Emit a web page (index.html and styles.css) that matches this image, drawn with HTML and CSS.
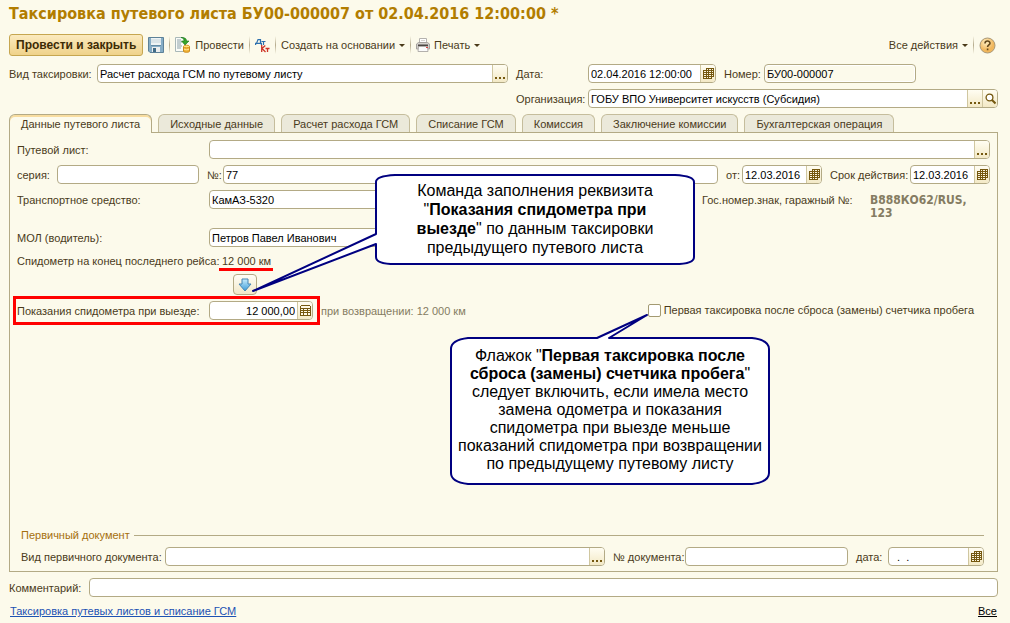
FILE: index.html
```html
<!DOCTYPE html>
<html lang="ru">
<head>
<meta charset="utf-8">
<title>Таксировка путевого листа</title>
<link rel="stylesheet" href="styles.css">
</head>
<body>
<svg class="defs" aria-hidden="true">
  <symbol id="calendar" viewBox="0 0 11 12">
    <path d="M3 0h8v9H9v2H0V2h3z" fill="#75580f"/>
    <path d="M4 1h1v1H4zM6 1h2v1H6zM9 1h1v1H9zM1 3h2v1H1zM4 3h1v1H4zM6 3h2v1H6zM9 3h1v1H9zM1 5h2v1H1zM4 5h1v1H4zM6 5h2v1H6zM9 5h1v1H9zM1 7h2v1H1zM4 7h1v1H4zM6 7h2v1H6zM9 7h1v1H9zM1 9h2v1H1zM4 9h1v1H4zM6 9h2v1H6z" fill="#fcf6e0"/>
  </symbol>
  <symbol id="dots" viewBox="0 0 11 12">
    <path d="M0 9h2v2H0zM4 9h2v2H4zM8 9h2v2H8z" fill="#75580f"/>
  </symbol>
</svg>
<main class="form">
  <h1 class="title">Таксировка путевого листа БУ00-000007 от 02.04.2016 12:00:00 *</h1>

  <div class="toolbar">
    <button class="primary">Провести и закрыть</button>
    <button class="tool save" aria-label="Записать">
      <svg width="16" height="16" viewBox="0 0 16 16"><path d="M.5.500h15v15H2l-1.500-1.500z" fill="#86adc6" stroke="#5d8198"/><path d="M3 1h10v7H3z" fill="#eef4f5"/><path d="M3 3h10M3 5h10" stroke="#c6d4da"/><path d="M3 8h10v1H3z" fill="#648ca5"/><path d="M4 10h8v5H4z" fill="#eceeee"/><path d="M5 11h3v4H5z" fill="#416b86"/></svg>
    </button>
    <span class="separator"></span>
    <button class="tool">
      <svg width="16" height="16" viewBox="0 0 16 16"><path d="M.5.500h8l2 2v12H.5z" fill="#fafcf8" stroke="#a9b8b8"/><path d="M2 3h4M2 5h5M2 7h4M2 9h5M2 11h4" stroke="#8ba0a8"/><path d="M6 .500c4 0 5.500 1 5.500 3.500H14L10 8 6.500 4H9c0-2-1-3-3-3.500z" fill="#35a52b" stroke="#167216" stroke-width=".6"/><path d="M8.500 9.500v4.700c0 1.500 6 1.500 6 0V9.500" fill="#f1b235" stroke="#c98a1c"/><ellipse cx="11.500" cy="9.500" rx="3" ry="1.300" fill="#ffe47c" stroke="#d79a25"/><path d="M9 12c1 1 4 1 5 0" stroke="#ffe99a" fill="none"/></svg>
      <span>Провести</span>
    </button>
    <span class="separator"></span>
    <button class="tool" aria-label="Дебет и кредит">
      <svg width="15" height="15" viewBox="0 0 15 15" fill="none"><path d="M.600 7V5.400h5.800V7M1.500 5.400L3 1.600h2.500v3.800M6.500 3.500h4M8.500 3.500V7" stroke="#2d70ae" stroke-width="1.200"/><path d="M6.700 7v7M10.300 7.500L7 10.500l3.500 3.500M10.500 10.500h4M12.500 10.500V14" stroke="#cf3527" stroke-width="1.300"/></svg>
    </button>
    <span class="separator"></span>
    <button class="tool">Создать на основании <i class="caret"></i></button>
    <span class="separator"></span>
    <button class="tool">
      <svg width="14" height="14" viewBox="0 0 14 14"><path d="M3.500 5V.5h7V5" fill="#fff" stroke="#b5b2ae"/><path d="M5 2.500h4" stroke="#d5d2ce"/><path d="M.5 6l2-1.500h9l2 1.500v5H.5z" fill="#d4d1cd" stroke="#a5a19c"/><path d="M2 6.500h10v3H2z" fill="#4c4642"/><path d="M2.500 8.500h9l.5 5H2z" fill="#fbfbfb" stroke="#b3b0ac"/><path d="M10 9h2v1h-2z" fill="#d44"/></svg>
      <span>Печать</span> <i class="caret"></i>
    </button>
    <span class="spacer"></span>
    <button class="tool">Все действия <i class="caret"></i></button>
    <span class="separator"></span>
    <button class="tool help" aria-label="Справка">
      <svg width="17" height="17" viewBox="0 0 17 17"><defs><radialGradient id="gold" cx=".4" cy=".3"><stop offset="0" stop-color="#fff0c4"/><stop offset="1" stop-color="#f1b75d"/></radialGradient></defs><circle cx="8.500" cy="8.500" r="7.500" fill="url(#gold)" stroke="#a89878"/><path d="M6 6.500c0-3.200 5-3.200 5-.3 0 1.700-2.400 1.700-2.400 3.800M8.600 11.500v1.700" fill="none" stroke="#64491c" stroke-width="1.600"/></svg>
    </button>
  </div>

  <div class="header">
    <div class="row kind">
      <label class="label-kind" for="kind">Вид таксировки:</label>
      <div class="field grow"><input id="kind" value="Расчет расхода ГСМ по путевому листу"><button aria-label="Выбрать"><svg><use href="#dots"/></svg></button></div>
    </div>
    <div class="header-right">
      <div class="row">
        <label class="label-right" for="date">Дата:</label>
        <div class="field datetime"><input id="date" value="02.04.2016 12:00:00"><button aria-label="Календарь"><svg><use href="#calendar"/></svg></button></div>
        <label class="label-number" for="number">Номер:</label>
        <div class="field number readonly"><input id="number" value="БУ00-000007" readonly></div>
      </div>
      <div class="row">
        <label class="label-right" for="org">Организация:</label>
        <div class="field grow"><input id="org" value="ГОБУ ВПО Университет искусств (Субсидия)"><button aria-label="Выбрать"><svg><use href="#dots"/></svg></button><button aria-label="Открыть"><svg viewBox="0 0 11 12"><circle cx="4.500" cy="4.500" r="3.400" fill="#fff" stroke="#75580f" stroke-width="1.300"/><path d="M7 7l3.500 3.500" stroke="#75580f" stroke-width="2"/></svg></button></div>
      </div>
    </div>
  </div>

  <div class="tabs" role="tablist">
    <button class="tab active" role="tab" aria-selected="true">Данные путевого листа</button>
    <button class="tab" role="tab">Исходные данные</button>
    <button class="tab" role="tab">Расчет расхода ГСМ</button>
    <button class="tab" role="tab">Списание ГСМ</button>
    <button class="tab" role="tab">Комиссия</button>
    <button class="tab" role="tab">Заключение комиссии</button>
    <button class="tab" role="tab">Бухгалтерская операция</button>
  </div>

  <section class="panel">
    <div class="row">
      <label class="label-main" for="sheet">Путевой лист:</label>
      <div class="field grow"><input id="sheet"><button aria-label="Выбрать"><svg><use href="#dots"/></svg></button></div>
    </div>
    <div class="row">
      <label class="label-series" for="series">серия:</label>
      <div class="field series"><input id="series"></div>
      <label class="label-no" for="no">№:</label>
      <div class="field grow"><input id="no" value="77"></div>
      <label class="label-from" for="from">от:</label>
      <div class="field date"><input id="from" value="12.03.2016"><button aria-label="Календарь"><svg><use href="#calendar"/></svg></button></div>
      <label class="label-term" for="term">Срок действия:</label>
      <div class="field date"><input id="term" value="12.03.2016"><button aria-label="Календарь"><svg><use href="#calendar"/></svg></button></div>
    </div>
    <div class="row vehicle">
      <label class="label-main" for="vehicle">Транспортное средство:</label>
      <div class="field grow"><input id="vehicle" value="КамАЗ-5320"></div>
      <span class="plate-label">Гос.номер.знак, гаражный №:</span>
      <strong class="plate">В888КО62/RUS, 123</strong>
    </div>
    <div class="row driver">
      <label class="label-main" for="driver">МОЛ (водитель):</label>
      <div class="field driver-field"><input id="driver" value="Петров Павел Иванович"></div>
    </div>
    <div class="row last">
      <span class="last-label">Спидометр на конец последнего рейса:</span>
      <span class="marked">12 000 км</span>
    </div>
    <button class="fill" aria-label="Заполнить показания">
      <svg width="14" height="14" viewBox="0 0 14 14"><defs><linearGradient id="blue" x2="0" y2="1"><stop offset="0" stop-color="#c8ecfb"/><stop offset="1" stop-color="#3a9bd8"/></linearGradient></defs><path d="M4 1h6v5h3L7 13 1 6h3z" fill="url(#blue)" stroke="#4585b4"/></svg>
    </button>
    <div class="row odometer">
      <div class="row highlighted">
        <label class="label-main" for="odo">Показания спидометра при выезде:</label>
        <div class="field amount"><input id="odo" value="12 000,00"><button aria-label="Калькулятор"><svg viewBox="0 0 11 12"><path d="M1 0h9v1h1v10H0V1h1z" fill="#75580f"/><path d="M1 1h9v2H1zM1 4h2v1H1zM4 4h3v1H4zM8 4h2v1H8zM1 6h2v1H1zM4 6h3v1H4zM8 6h2v1H8zM1 8h2v2H1zM4 8h3v2H4zM8 8h2v2H8z" fill="#fff9e6"/></svg></button></div>
      </div>
      <span class="muted">при возвращении: 12 000 км</span>
      <label class="check"><input type="checkbox">Первая таксировка после сброса (замены) счетчика пробега</label>
    </div>

    <fieldset class="primary-doc">
      <legend>Первичный документ</legend>
      <div class="row">
        <label class="label-doc" for="doc">Вид первичного документа:</label>
        <div class="field grow"><input id="doc"><button aria-label="Выбрать"><svg><use href="#dots"/></svg></button></div>
        <label class="label-docno" for="docno">№ документа:</label>
        <div class="field docno"><input id="docno"></div>
        <label class="label-docdate" for="docdate">дата:</label>
        <div class="field docdate"><input id="docdate" value="  .  ."><button aria-label="Календарь"><svg><use href="#calendar"/></svg></button></div>
      </div>
    </fieldset>

    <aside class="callout fill-note">
      <svg viewBox="0 0 320 92" width="320" height="92"><path d="M20 1H300Q319 2 319 8V83Q319 90 300 90H20Q1 90 1 83V70L-122 117 1 60V8Q1 2 20 1Z"/></svg>
      <p>Команда заполнения реквизита<br>"<b>Показания спидометра при<br>выезде</b>" по данным таксировки<br>предыдущего путевого листа</p>
    </aside>
    <aside class="callout check-note">
      <svg viewBox="0 0 320 148" width="320" height="148"><path d="M18 1H147L197-22 159 1H302Q319 3 319 12V136Q319 145 302 147H18Q1 145 1 136V12Q1 3 18 1Z"/></svg>
      <p>Флажок "<b>Первая таксировка после<br>сброса (замены) счетчика пробега</b>"<br>следует включить, если имела место<br>замена одометра и показания<br>спидометра при выезде меньше<br>показаний спидометра при возвращении<br>по предыдущему путевому листу</p>
    </aside>
  </section>

  <div class="row comment">
    <label class="label-comment" for="comment">Комментарий:</label>
    <div class="field grow"><input id="comment"></div>
  </div>
  <footer class="footer">
    <a class="link" href="#">Таксировка путевых листов и списание ГСМ</a>
    <a class="all" href="#">Все</a>
  </footer>
</main>
</body>
</html>
```

FILE: styles.css
```css
* { box-sizing: border-box; }
body {
  margin: 0;
  background: #fcfaeb;
  color: #4a3a1a;
  font: 11px/14px "Liberation Sans", Arial, sans-serif;
}
button, input { font: inherit; color: inherit; margin: 0; }
button { cursor: pointer; }
.defs { position: absolute; width: 0; height: 0; }

.form {
  display: flex;
  flex-direction: column;
  min-height: 100vh;
  padding: 4px 12px 5px 9px;
}
.title {
  margin: 0;
  color: #b27d00;
  font: bold 16px/20px "DejaVu Sans Condensed", "DejaVu Sans", sans-serif;
  font-stretch: condensed;
}

.toolbar { display: flex; align-items: center; height: 22px; margin-top: 10px; gap: 5px; }
.primary {
  height: 22px;
  padding: 0 6px;
  border: 1px solid #c6a650;
  border-radius: 3px;
  background: linear-gradient(#fbeabf, #efd28a);
  color: #3d2b05;
  font-weight: bold;
  font-size: 12px;
  white-space: nowrap;
}
.tool {
  display: flex;
  align-items: center;
  gap: 4px;
  padding: 0;
  border: 0;
  background: none;
  white-space: nowrap;
}
.separator { width: 1px; height: 18px; background: linear-gradient(#fcfaeb, #b5ab8d, #fcfaeb); }
.caret { border: 3px solid transparent; border-top-color: #4a3a1a; border-bottom: 0; }
.spacer, .grow { flex: 1; }
.help { margin-right: 2px; }

.header {
  display: grid;
  grid-template-columns: minmax(0, 499fr) minmax(0, 482fr);
  gap: 8px;
  margin-top: 8px;
}
.header-right { display: flex; flex-direction: column; gap: 6px; }
.row { display: flex; align-items: flex-start; min-height: 19px; }
.row label, .last-label, .muted, .plate-label {
  flex: none;
  height: 19px;
  line-height: 21px;
  white-space: nowrap;
}
.label-kind { width: 88px; }
.label-right { width: 72px; }
.label-number { width: 48px; padding-left: 8px; }
.field {
  display: flex;
  min-width: 0;
  height: 19px;
  border: 1px solid #b3aa85;
  border-radius: 4px;
  background: #fff;
  overflow: hidden;
}
.field input {
  flex: 1;
  width: 0;
  min-width: 0;
  padding: 0 2px;
  border: 0;
  outline: 0;
  background: none;
  color: #000;
}
.field button {
  flex: none;
  width: 15px;
  padding: 2px 1px;
  border: 0;
  border-left: 1px solid #d0c7a0;
  background: linear-gradient(#fffdf2, #f3e9c6);
  line-height: 0;
}
.field svg { width: 11px; height: 12px; }
.readonly { background: #fcfaeb; box-shadow: inset 0 0 0 1px #fff; }
.datetime { width: 128px; }
.number { width: 152px; }

.tabs { display: flex; gap: 6px; margin-top: 6px; }
.tab {
  height: 18px;
  padding: 0 11px;
  border: 1px solid #c5bd9c;
  border-bottom: 0;
  border-radius: 6px 6px 0 0;
  background: #ebe9da;
  white-space: nowrap;
}
.tab.active {
  height: 19px;
  margin-bottom: -1px;
  border-color: #b3aa85;
  background: #fcfaeb;
  box-shadow: inset 0 2px #f8dda0;
  z-index: 1;
}
.panel {
  position: relative;
  display: flex;
  flex: 1;
  flex-direction: column;
  gap: 6px;
  padding: 7px 7px 5px;
  border: 1px solid #b3aa85;
}
.label-main { width: 192px; }
.label-series { width: 40px; }
.series { width: 142px; }
.label-no { width: 24px; padding-left: 8px; }
.label-from { width: 24px; padding-left: 8px; }
.label-term { width: 88px; padding-left: 8px; }
.date { width: 80px; }
.plate-label { width: 176px; padding-left: 8px; }
.plate {
  width: 120px;
  padding-top: 4px;
  color: #857c62;
  font: bold 12px/13px "DejaVu Sans Condensed", "DejaVu Sans", sans-serif;
}
.vehicle { min-height: 32px; }
.driver-field { width: 485px; }
.last { margin-top: -2px; }
.last-label { width: 202px; }
.marked { padding: 4px 2px 0 3px; border-bottom: 3px solid #f00; line-height: 13px; }
.fill {
  display: grid;
  place-items: center;
  width: 24px;
  height: 21px;
  margin: -3px 0 0 216px;
  padding: 0;
  border: 1px solid #b3aa85;
  border-radius: 4px;
  background: linear-gradient(#fffef6, #f1e8c9);
}
.highlighted { position: relative; width: 304px; }
.highlighted::after {
  content: "";
  position: absolute;
  inset: -5px 1px -5px -4px;
  border: 3px solid #f00;
  pointer-events: none;
}
.amount { width: 104px; }
.amount input { text-align: right; }
.muted { color: #857c62; }
.check { display: flex; align-items: center; gap: 3px; margin-left: auto; padding-right: 16px; }
.check input {
  appearance: none;
  width: 13px;
  height: 13px;
  border: 1px solid #a39a72;
  border-radius: 2px;
  background: #fff;
}

.primary-doc { margin: auto 6px 0 4px; padding: 0; border: 0; min-width: 0; }
.primary-doc legend {
  display: flex;
  align-items: center;
  gap: 4px;
  width: 100%;
  padding: 0;
  margin-bottom: 5px;
  color: #a56f0d;
}
.primary-doc legend::after { content: ""; flex: 1; height: 1px; background: #b3aa85; }
.label-doc { width: 144px; }
.label-docno { width: 80px; padding-left: 8px; }
.docno { width: 163px; }
.label-docdate { width: 40px; padding-left: 8px; }
.docdate { width: 96px; }
.docdate input { white-space: pre; }

.callout { position: absolute; width: 320px; color: #000; text-align: center; }
.callout svg { position: absolute; inset: 0; overflow: visible; }
.callout path { fill: #fff; stroke: #000080; stroke-width: 2; stroke-linejoin: round; }
.callout p { position: relative; margin: 0; white-space: nowrap; }
.fill-note { left: 365px; top: 41px; }
.fill-note p { padding-top: 7px; font-size: 16px; line-height: 19px; }
.check-note { left: 440px; top: 204px; }
.check-note p { padding-top: 10px; font-size: 16px; line-height: 18px; }

.comment { margin-top: 6px; }
.label-comment { width: 80px; }
.footer { display: flex; justify-content: space-between; margin-top: 7px; padding: 0 1px; }
.link { color: #1d52b3; }
.all { color: #000; }
```
